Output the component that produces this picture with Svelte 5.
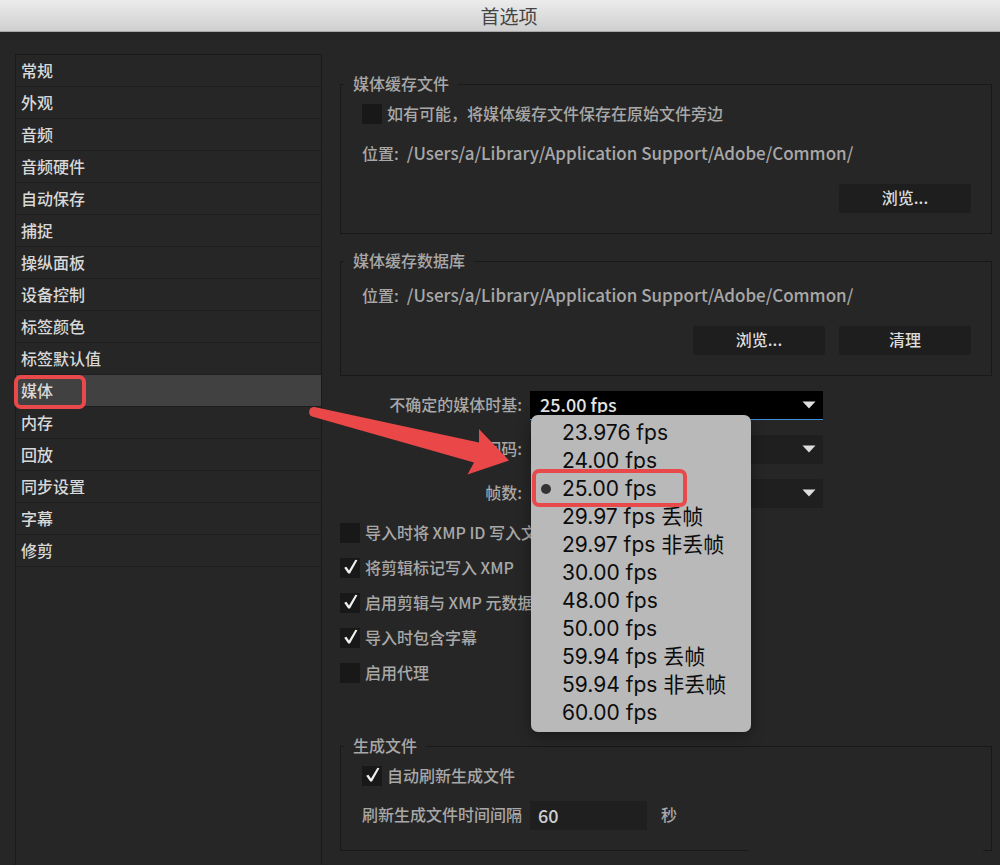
<script lang="ts">
  const categories = [
    '常规', '外观', '音频', '音频硬件', '自动保存', '捕捉', '操纵面板', '设备控制',
    '标签颜色', '标签默认值', '媒体', '内存', '回放', '同步设置', '字幕', '修剪'
  ];

  const timebases = [
    '23.976 fps', '24.00 fps', '25.00 fps', '29.97 fps 丢帧', '29.97 fps 非丢帧', '30.00 fps',
    '48.00 fps', '50.00 fps', '59.94 fps 丢帧', '59.94 fps 非丢帧', '60.00 fps'
  ];

  const cachePath = '/Users/a/Library/Application Support/Adobe/Common/';

  let category = $state('媒体');
  let timebase = $state('25.00 fps');
  let besideOriginals = $state(false);
  let autoRefresh = $state(true);
  let interval = $state('60');

  let options = $state([
    { label: '导入时将 XMP ID 写入文件', checked: false },
    { label: '将剪辑标记写入 XMP', checked: true },
    { label: '启用剪辑与 XMP 元数据链接', checked: true },
    { label: '导入时包含字幕', checked: true },
    { label: '启用代理', checked: false }
  ]);
</script>

{#snippet tick()}
  <svg class="tick" viewBox="0 0 20 20" aria-hidden="true">
    <path d="M4.2 9.8 L6.4 8.8 L9 12.4 L15.4 1.8 L17.4 2.2 L10 15.4 L8.2 15.4 Z" />
  </svg>
{/snippet}

{#snippet caret()}
  <svg class="caret" viewBox="0 0 14 8" aria-hidden="true"><path d="M0.5 0.5 H13.5 L7 7.5 Z" /></svg>
{/snippet}

<div class="window">
  <header class="titlebar">首选项</header>

  <div class="body">
    <nav class="sidebar">
      {#each categories as name}
        <button class="category" class:active={name === category} onclick={() => (category = name)}>
          {name}
          {#if name === '媒体'}<span class="mark mark-category"></span>{/if}
        </button>
      {/each}
    </nav>

    <main class="panel">
      <fieldset>
        <legend>媒体缓存文件</legend>
        <div class="stack">
          <label class="check">
            <span class="box">
              <input type="checkbox" bind:checked={besideOriginals} />
              {#if besideOriginals}{@render tick()}{/if}
            </span>
            如有可能，将媒体缓存文件保存在原始文件旁边
          </label>
          <p class="location"><span>位置:</span><span class="path">{cachePath}</span></p>
          <div class="actions">
            <button class="push">浏览...</button>
          </div>
        </div>
      </fieldset>

      <fieldset class="database">
        <legend>媒体缓存数据库</legend>
        <div class="stack">
          <p class="location"><span>位置:</span><span class="path">{cachePath}</span></p>
          <div class="actions">
            <button class="push">浏览...</button>
            <button class="push">清理</button>
          </div>
        </div>
      </fieldset>

      <div class="fields">
        <div class="field">
          <label for="timebase">不确定的媒体时基:</label>
          <div class="dropdown open">
            <select id="timebase" bind:value={timebase}>
              {#each timebases as rate}
                <option>{rate}</option>
              {/each}
            </select>
            {@render caret()}

            <div class="menu" role="listbox" aria-label="不确定的媒体时基">
              {#each timebases as rate}
                <button
                  class="rate"
                  class:chosen={rate === timebase}
                  role="option"
                  aria-selected={rate === timebase}
                  onclick={() => (timebase = rate)}
                >
                  {rate}
                  {#if rate === '25.00 fps'}<span class="mark mark-rate"></span>{/if}
                </button>
              {/each}
            </div>

            <svg class="arrow" viewBox="0 0 204 72" aria-hidden="true">
              <path d="M7.5 6 L172 41.5 V28 L202 59.5 L160.5 73.5 L167 61.5 L5 15.5 A5 5 0 0 1 7.5 6 Z" />
            </svg>
          </div>
        </div>
        <div class="field">
          <label for="timecode">时间码:</label>
          <div class="dropdown">
            <select id="timecode"></select>
            {@render caret()}
          </div>
        </div>
        <div class="field">
          <label for="frames">帧数:</label>
          <div class="dropdown">
            <select id="frames"></select>
            {@render caret()}
          </div>
        </div>
      </div>

      <div class="options">
        {#each options as option}
          <label class="check">
            <span class="box">
              <input type="checkbox" bind:checked={option.checked} />
              {#if option.checked}{@render tick()}{/if}
            </span>
            {option.label}
          </label>
        {/each}
      </div>

      <fieldset class="render">
        <legend>生成文件</legend>
        <div class="stack">
          <label class="check">
            <span class="box">
              <input type="checkbox" bind:checked={autoRefresh} />
              {#if autoRefresh}{@render tick()}{/if}
            </span>
            自动刷新生成文件
          </label>
          <div class="refresh">
            <label for="interval">刷新生成文件时间间隔</label>
            <input id="interval" type="text" bind:value={interval} />
            <span>秒</span>
          </div>
        </div>
      </fieldset>
    </main>
  </div>
</div>

<style>
  :global(body) {
    margin: 0;
    background: #262626;
  }

  .window {
    display: flex;
    flex-direction: column;
    min-height: 100vh;
    overflow: hidden;
    background: #262626;
    color: #a8a8a8;
    font: 500 16px/18px "Noto Sans CJK SC", sans-serif;
  }

  button,
  input,
  select {
    font: inherit;
    color: inherit;
    border: 0;
    margin: 0;
    padding: 0;
    background: none;
  }

  .titlebar {
    height: 32px;
    box-sizing: border-box;
    border-bottom: 1px solid #a8a8a8;
    background: linear-gradient(#ececec, #cfcfcf);
    color: #454545;
    font-size: 19px;
    font-weight: 400;
    line-height: 32px;
    text-align: center;
    padding-left: 18px;
  }

  .body {
    display: flex;
    flex: 1;
    gap: 18px;
    padding: 22px 8px 0 15px;
  }

  .sidebar {
    display: flex;
    flex-direction: column;
    flex: 0 0 305px;
    border: 1px solid #1a1a1a;
    border-bottom: 0;
  }

  .category {
    position: relative;
    height: 32px;
    padding: 0 5px 1px;
    border-bottom: 1px solid #1e1e1e;
    color: #d8d8d8;
    text-align: left;
  }

  .category.active {
    background: #414141;
  }

  .mark {
    position: absolute;
    box-sizing: border-box;
    border: 4px solid #e84a4c;
    border-radius: 7px;
    pointer-events: none;
  }

  .mark-category {
    top: 0;
    left: -2px;
    width: 72px;
    height: 34px;
    z-index: 1;
  }

  .panel {
    flex: 1;
    min-width: 0;
    padding-top: 20px;
  }

  fieldset {
    margin: 0;
    padding: 10px 20px 20px 21px;
    border: 1px solid #191919;
    min-width: 0;
  }

  legend {
    margin-left: -18px;
    padding: 0 9px 2px;
  }

  .stack {
    display: flex;
    flex-direction: column;
    gap: 20px;
  }

  .check {
    display: flex;
    gap: 5px;
  }

  .box {
    position: relative;
    flex: none;
    width: 20px;
    height: 20px;
    background: #181818;
  }

  .box input {
    appearance: none;
    display: block;
    width: 20px;
    height: 20px;
  }

  .tick {
    position: absolute;
    inset: 0;
    fill: #f0f0f0;
    pointer-events: none;
  }

  .location {
    display: flex;
    gap: 8px;
    margin: 0;
    padding-bottom: 2px;
  }

  .path {
    font-size: 17px;
  }

  .actions {
    display: flex;
    justify-content: flex-end;
    gap: 14px;
  }

  .push {
    width: 132px;
    height: 29px;
    padding-bottom: 3px;
    border-radius: 2px;
    background: #1e1e1e;
    color: #dcdcdc;
  }

  .database {
    margin-top: 17px;
    padding-top: 15px;
  }

  .fields {
    display: flex;
    flex-direction: column;
    gap: 15px;
    margin-top: 15px;
  }

  .field {
    display: flex;
    align-items: center;
    gap: 8px;
  }

  .field label {
    width: 182px;
    padding-bottom: 3px;
    text-align: right;
  }

  .dropdown {
    position: relative;
    width: 293px;
    height: 29px;
    background: #1f1f1f;
  }

  .dropdown select {
    appearance: none;
    display: block;
    box-sizing: border-box;
    width: 100%;
    height: 100%;
    padding: 0 10px 2px;
    color: #e6e6e6;
    font-size: 18px;
  }

  .dropdown.open {
    background: #000;
  }

  .dropdown.open select {
    border-bottom: 1px solid #3f8fdc;
    border-radius: 0;
  }

  .caret {
    position: absolute;
    top: 10px;
    right: 7px;
    width: 14px;
    height: 8px;
    fill: #dedede;
    pointer-events: none;
  }

  .menu {
    position: absolute;
    z-index: 2;
    top: 24px;
    left: 1px;
    width: 220px;
    box-sizing: border-box;
    padding: 4px 0 5px;
    border-radius: 7px;
    background: #b9b9b9;
    box-shadow: 0 4px 14px rgba(0, 0, 0, 0.35);
    color: #0c0c0c;
    font: 400 21px/28px Inter, "Noto Sans CJK SC", sans-serif;
  }

  .rate {
    position: relative;
    display: block;
    width: 100%;
    height: 28px;
    padding-left: 31px;
    text-align: left;
    white-space: nowrap;
  }

  .rate.chosen::before {
    content: '';
    position: absolute;
    top: 9px;
    left: 10px;
    width: 10px;
    height: 10px;
    border-radius: 50%;
    background: #333;
  }

  .mark-rate {
    top: -6px;
    left: 1px;
    width: 155px;
    height: 38px;
    z-index: 1;
  }

  .arrow {
    position: absolute;
    z-index: 3;
    top: 10px;
    right: 100%;
    width: 204px;
    height: 72px;
    margin-right: 19px;
    overflow: visible;
    fill: #ea4749;
    pointer-events: none;
  }

  .options {
    display: flex;
    flex-direction: column;
    gap: 15px;
    margin-top: 15px;
  }

  .render {
    position: relative;
    margin-top: 53px;
  }

  /* the frame stays open along the bottom right */
  .render::after {
    content: '';
    position: absolute;
    right: 8px;
    bottom: -1px;
    width: 235px;
    height: 1px;
    background: #262626;
  }

  .render .stack {
    gap: 15px;
  }

  .refresh {
    display: flex;
    align-items: center;
    gap: 8px;
  }

  .refresh label,
  .refresh span {
    padding-bottom: 3px;
  }

  .refresh input {
    box-sizing: border-box;
    width: 117px;
    height: 29px;
    padding: 0 8px 2px;
    background: #1f1f1f;
    color: #d0d0d0;
    font-size: 18px;
  }

  .refresh span {
    margin-left: 6px;
  }
</style>
